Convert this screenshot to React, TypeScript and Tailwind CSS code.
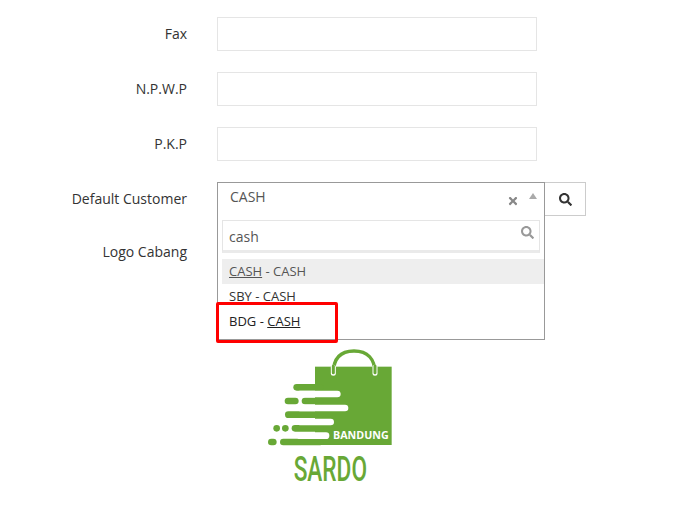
import { FaSearch, FaTimes } from "react-icons/fa";

function Row({ label, labelClass, children }: { label: string; labelClass?: string; children?: React.ReactNode }) {
  return (
    <div className="flex items-start mb-[21px]">
      <label className={"w-[187px] text-right text-[14px] text-[#333] shrink-0 " + (labelClass ?? "h-[33px] leading-[33px]")}>{label}</label>
      <div className="ml-[30px]">{children}</div>
    </div>
  );
}

function TextInput() {
  return <div className="w-[320px] h-[34px] border border-[#e5e5e5] bg-white" />;
}

function Logo() {
  const green = "#68a836";
  const bars: [number, number][] = [[130, 142], [155, 183], [105, 224], [125, 265], [90, 306]];
  const stripes: [number, number][] = [[272, 162], [295, 204], [252, 246], [238, 287]];
  return (
    <svg width="160" height="150" viewBox="0 0 480 450">
      <rect x="195" y="80" width="230" height="235" fill={green} />
      {bars.map(([x, y]) => (
        <line key={y} x1={x + 10} y1={y} x2="210" y2={y} stroke={green} strokeWidth="20" strokeLinecap="round" />
      ))}
      {stripes.map(([x, y]) => (
        <line key={y} x1="150" y1={y} x2={x - 10} y2={y} stroke="#fff" strokeWidth="20" strokeLinecap="round" />
      ))}
      <line x1="114" y1="183" x2="136" y2="183" stroke={green} strokeWidth="20" strokeLinecap="round" />
      <circle cx="80" cy="265" r="10" fill={green} />
      <circle cx="106" cy="265" r="10" fill={green} />
      <line x1="64" y1="306" x2="70" y2="306" stroke={green} strokeWidth="20" strokeLinecap="round" />
      <path d="M250 100C250 55 272 33 312 33C352 33 375 55 375 100" fill="none" stroke={green} strokeWidth="10" />
      <line x1="250" y1="82" x2="250" y2="100" stroke="#fff" strokeWidth="15" strokeLinecap="round" />
      <line x1="375" y1="82" x2="375" y2="100" stroke="#fff" strokeWidth="15" strokeLinecap="round" />
      <line x1="250" y1="78" x2="250" y2="98" stroke={green} strokeWidth="9" strokeLinecap="round" />
      <line x1="375" y1="78" x2="375" y2="98" stroke={green} strokeWidth="9" strokeLinecap="round" />
      <text x="249" y="296" fontFamily="'Open Sans', sans-serif" fontWeight="700" fontSize="33" fill="#fff" textLength="167" lengthAdjust="spacingAndGlyphs">BANDUNG</text>
      <text x="131" y="422" fontFamily="Roboto, sans-serif" fontWeight="500" fontSize="103" fill={green} textLength="220" lengthAdjust="spacingAndGlyphs">SARDO</text>
    </svg>
  );
}

export default function App() {
  return (
    <div className="w-[677px] h-[514px] overflow-hidden bg-white pt-[17px] font-['Open_Sans',sans-serif]">
      <Row label="Fax"><TextInput /></Row>
      <Row label="N.P.W.P"><TextInput /></Row>
      <Row label="P.K.P"><TextInput /></Row>
      <Row label="Default Customer">
        <div className="flex">
          <div className="relative w-[328px] h-[34px] border border-[#999] bg-white text-[14px]">
            <span className="absolute left-[12px] top-0 leading-[28px] text-[#555]">CASH</span>
            <FaTimes className="absolute left-[289px] top-[12px] text-[#888] text-[12px]" />
            <div className="absolute left-[311px] top-[10px] w-0 h-0 border-x-[4px] border-x-transparent border-b-[6px] border-b-[#aaa]" />
            <div className="absolute -left-px top-[32px] w-[328px] h-[125px] border-x border-b border-[#999] bg-white z-10">
              <div className="relative mx-[4px] mt-[5px] h-[33px] w-[318px] border border-[#e5e5e5] border-b-[3px] border-b-[#eaeaea] text-[#555] pl-[6px] leading-[31px]">
                cash
                <FaSearch className="absolute right-[5px] top-[5px] text-[#999] text-[13px]" />
              </div>
              <div className="mt-[6px] ml-[4px] text-[#333] text-[13px]">
                <div className="h-[25px] leading-[25px] pl-[7px] bg-[#eee] text-[#555]"><span className="underline">CASH</span> - CASH</div>
                <div className="h-[25px] leading-[25px] pl-[7px]">SBY - CASH</div>
                <div className="h-[25px] leading-[25px] pl-[7px] text-[#222]">BDG - <span className="underline">CASH</span></div>
              </div>
              <div className="absolute left-[-2px] top-[87px] w-[122px] h-[41px] border-[3px] border-[#f00] rounded-[2px]" />
            </div>
          </div>
          <div className="w-[41px] h-[34px] border border-[#ccc] border-l-0 flex items-center justify-center text-[#333] text-[13px]">
            <FaSearch />
          </div>
        </div>
      </Row>
      <Row label="Logo Cabang" labelClass="h-[30px] leading-[30px]">
        <div className="ml-[33px] mt-[103px]"><Logo /></div>
      </Row>
    </div>
  );
}
